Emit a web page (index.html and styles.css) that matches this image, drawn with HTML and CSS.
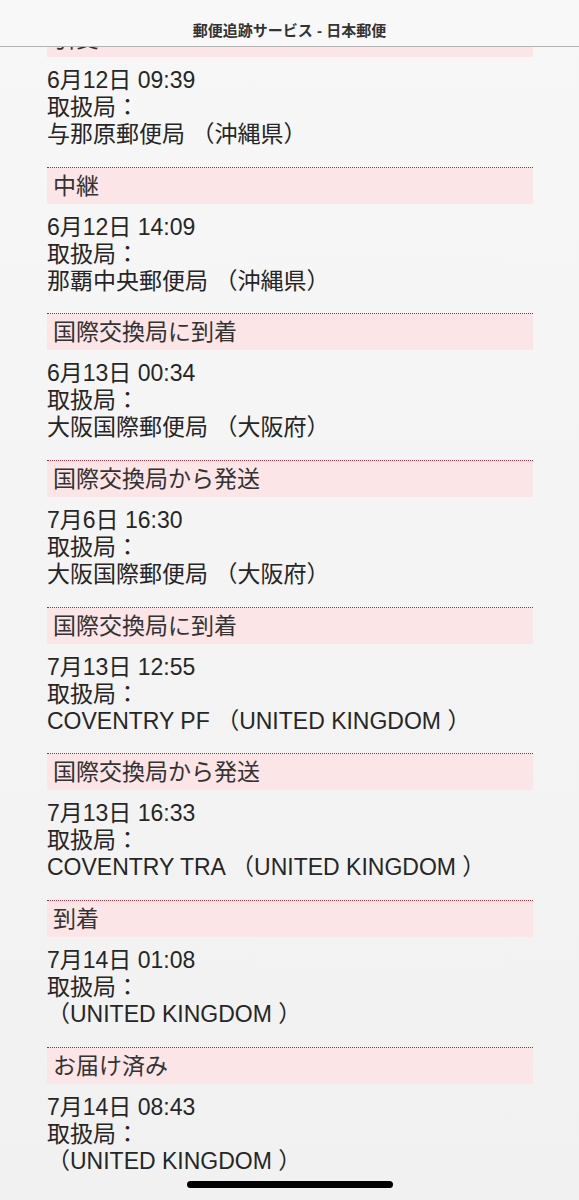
FILE: index.html
```html
<!DOCTYPE html>
<html lang="ja">
<head>
<meta charset="utf-8">
<title>郵便追跡サービス - 日本郵便</title>
<link rel="stylesheet" href="styles.css">
</head>
<body>
<header class="topbar">
  <div class="topbar-title">郵便追跡サービス - 日本郵便</div>
</header>
<main class="history">
  <section class="item">
    <div class="status">引受</div>
    <div class="detail">
      <div>6月12日 09:39</div>
      <div>取扱局：</div>
      <div>与那原郵便局 （沖縄県）</div>
    </div>
  </section>
  <section class="item">
    <div class="status">中継</div>
    <div class="detail">
      <div>6月12日 14:09</div>
      <div>取扱局：</div>
      <div>那覇中央郵便局 （沖縄県）</div>
    </div>
  </section>
  <section class="item">
    <div class="status">国際交換局に到着</div>
    <div class="detail">
      <div>6月13日 00:34</div>
      <div>取扱局：</div>
      <div>大阪国際郵便局 （大阪府）</div>
    </div>
  </section>
  <section class="item">
    <div class="status">国際交換局から発送</div>
    <div class="detail">
      <div>7月6日 16:30</div>
      <div>取扱局：</div>
      <div>大阪国際郵便局 （大阪府）</div>
    </div>
  </section>
  <section class="item">
    <div class="status">国際交換局に到着</div>
    <div class="detail">
      <div>7月13日 12:55</div>
      <div>取扱局：</div>
      <div>COVENTRY PF （UNITED KINGDOM ）</div>
    </div>
  </section>
  <section class="item">
    <div class="status">国際交換局から発送</div>
    <div class="detail">
      <div>7月13日 16:33</div>
      <div>取扱局：</div>
      <div>COVENTRY TRA （UNITED KINGDOM ）</div>
    </div>
  </section>
  <section class="item">
    <div class="status">到着</div>
    <div class="detail">
      <div>7月14日 01:08</div>
      <div>取扱局：</div>
      <div>（UNITED KINGDOM ）</div>
    </div>
  </section>
  <section class="item">
    <div class="status">お届け済み</div>
    <div class="detail">
      <div>7月14日 08:43</div>
      <div>取扱局：</div>
      <div>（UNITED KINGDOM ）</div>
    </div>
  </section>
</main>
<div class="home-indicator"></div>
</body>
</html>
```

FILE: styles.css
```css
html, body {
  margin: 0;
  padding: 0;
}

body {
  width: 579px;
  height: 1200px;
  overflow: hidden;
  background: linear-gradient(#f7f7f7, #f1f1f1);
  font-family: "Liberation Sans", "Noto Sans CJK JP", sans-serif;
  color: #262626;
}

.topbar {
  position: fixed;
  top: 0;
  left: 0;
  right: 0;
  height: 47px;
  background: #f8f8f8;
  border-bottom: 1px solid #b4b4b4;
  box-sizing: border-box;
  display: flex;
  align-items: flex-end;
  justify-content: center;
  padding-bottom: 6px;
  z-index: 2;
}

.topbar-title {
  font-size: 15px;
  font-weight: 600;
  color: #333;
}

.history {
  padding: 20px 46px 0 47px;
}

.item {
  border-top: 1px dotted #9c2a38;
}

.status {
  height: 36px;
  line-height: 36px;
  background: #fce5e6;
  padding-left: 6px;
  font-size: 23px;
  color: #333;
}

.detail {
  padding: 10px 0 18.67px;
  font-size: 23px;
  line-height: 27px;
}

.home-indicator {
  position: fixed;
  left: 187px;
  bottom: 12px;
  width: 206px;
  height: 7px;
  border-radius: 4px;
  background: #000;
}
```
